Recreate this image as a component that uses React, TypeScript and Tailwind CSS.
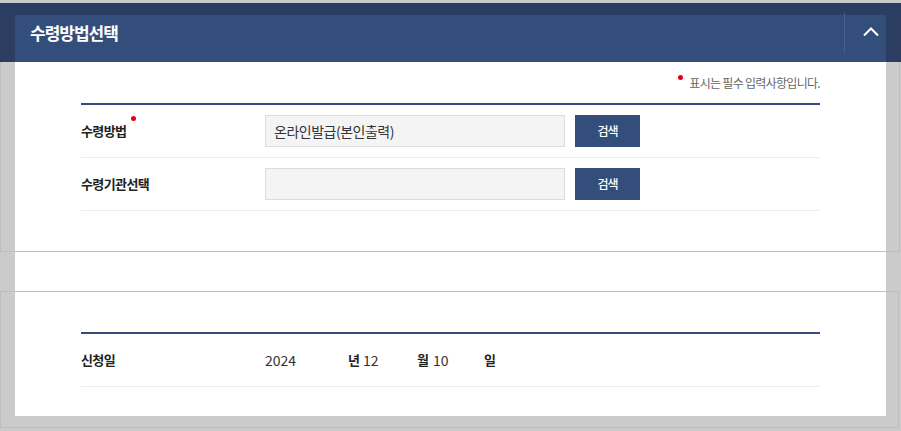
import React from "react";

const Dot = ({ className }: { className?: string }) => (
  <span
    className={`block h-[5px] w-[5px] shrink-0 rounded-full bg-[#e60012] ${className ?? ""}`}
  />
);

const SearchButton = () => (
  <button className="ml-[10px] h-[32px] w-[65px] bg-[#344e7b] text-[12px] font-medium tracking-[-1px] text-white">
    검색
  </button>
);

const App = () => {
  return (
    <div className="relative h-[431px] w-[901px] overflow-hidden bg-[#cbcbcb] font-['Noto_Sans_CJK_KR','Noto_Sans',sans-serif] text-[#222]">
      <div className="h-[3px]" />
      <div className="bg-[#2b3e62] px-[15px] pt-[12px]">
        <div className="flex h-[47px] items-start bg-[#344e7b]">
          <h2 className="flex-1 pl-[15px] pt-[6px] text-[17px] leading-[24px] font-bold tracking-[-1px] text-white">
            수령방법선택
          </h2>
          <div className="-mt-[2px] h-[40px] w-px bg-[#4a5f8b]" />
          <button className="flex h-[47px] w-[41px] items-start justify-start pl-[18px] pt-[12px]">
            <svg width="16" height="10" viewBox="0 0 16 10" fill="none">
              <path d="M1 8.5 8 1.5 15 8.5" stroke="#fff" strokeWidth="2" />
            </svg>
          </button>
        </div>
      </div>

      <div className="px-[15px]">
        <div className="h-[354px] bg-white px-[66px]">
          <div className="flex h-[41px] items-center justify-end text-[12px] tracking-[-0.7px] text-[#666]">
            <Dot className="mb-[10px] mr-[6px]" />
            <span>표시는 필수 입력사항입니다.</span>
          </div>

          <div className="border-t-2 border-[#344e7b]">
            <div className="flex items-center border-b border-[#ececec] py-[10px]">
              <div className="flex w-[184px] items-start text-[13px] font-bold tracking-[-0.6px]">
                <span>수령방법</span>
                <Dot className="-mt-[5px] ml-[5px]" />
              </div>
              <div className="flex h-[32px] w-[300px] items-center border border-[#dddddd] bg-[#f4f4f4] px-[8px] text-[14px] tracking-[-0.5px] text-[#333]">
                온라인발급(본인출력)
              </div>
              <SearchButton />
            </div>
            <div className="flex items-center border-b border-[#ececec] py-[10px]">
              <div className="w-[184px] text-[13px] font-bold tracking-[-0.6px]">
                수령기관선택
              </div>
              <div className="h-[32px] w-[300px] border border-[#dddddd] bg-[#f4f4f4]" />
              <SearchButton />
            </div>
          </div>

          <div className="mt-[121px] border-t-2 border-[#344e7b]">
            <div className="flex h-[53px] items-center border-b border-[#ececec] text-[14px] text-[#333]">
              <div className="w-[184px] text-[13px] font-bold tracking-[-0.6px] text-[#222]">
                신청일
              </div>
              <span className="w-[83px]">2024</span>
              <span className="w-[15px] text-[13px] font-bold text-[#222]">년</span>
              <span className="w-[54px]">12</span>
              <span className="w-[16px] text-[13px] font-bold text-[#222]">월</span>
              <span className="w-[51px]">10</span>
              <span className="text-[13px] font-bold text-[#222]">일</span>
            </div>
          </div>
        </div>
      </div>

      <div className="pointer-events-none absolute left-0 top-[62px] h-[190px] w-[900px] border border-t-0 border-[#bdbdbd]" />
      <div className="pointer-events-none absolute left-0 top-[291px] h-[137px] w-[899px] border border-[#bdbdbd]" />
    </div>
  );
};

export default App;
